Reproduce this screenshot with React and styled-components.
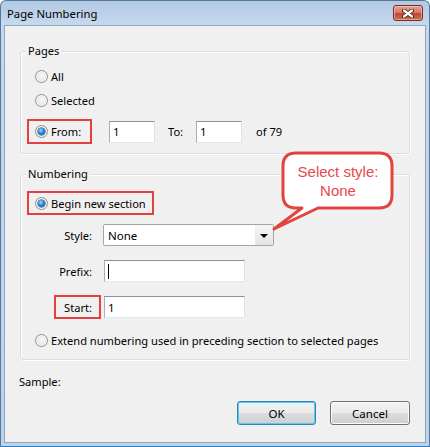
import React from "react";
import styled, { createGlobalStyle, css } from "styled-components";

const Global = createGlobalStyle`
  html, body { margin: 0; padding: 0; background: #ffffff; }
  body {
    font-family: "Noto Sans", "Open Sans", sans-serif;
    font-size: 11.1px;
    color: #000;
  }
  * { box-sizing: border-box; }
`;

const Stage = styled.div`
  position: relative;
  width: 430px;
  height: 447px;
`;

const Window = styled.div`
  width: 430px;
  height: 447px;
  display: flex;
  flex-direction: column;
  border: 1px solid #56779c;
  border-bottom-color: #2f7fc0;
  border-radius: 6px 6px 0 0;
  background: linear-gradient(#b2c9e3 0px, #c4d8ee 22px, #bcd3ec 100%);
  padding: 0 3px 3px;
`;

const TitleBar = styled.div`
  height: 24px;
  flex: none;
  display: flex;
  justify-content: space-between;
  align-items: flex-start;
  padding: 0 3px 0 3px;
`;

const Title = styled.div`
  font-size: 11.3px;
  line-height: 24px;
  padding-top: 1px;
  color: #000;
`;

const CloseButton = styled.div`
  width: 30px;
  height: 16px;
  margin-top: 4px;
  border: 1px solid #7c2a20;
  border-radius: 3px;
  background: linear-gradient(#e4a394 0%, #d27b68 45%, #c0472f 55%, #cf6d4f 100%);
  box-shadow: inset 0 0 0 1px rgba(255, 220, 210, 0.5);
  display: flex;
  align-items: center;
  justify-content: center;
`;

const Client = styled.div`
  flex: 1;
  display: flex;
  flex-direction: column;
  background: #f0f0f0;
  border: 1px solid #8fa6c0;
  padding: 17px 15px 0 15px;
`;

const Group = styled.fieldset`
  margin: ${(p) => p.$mt || 0}px 0 0;
  padding: 0;
  min-width: 0;
  border: 1px solid #d5dfe5;
  border-radius: 3px;
  box-shadow: inset 1px 1px 0 #ffffff, 1px 1px 0 #ffffff;
`;

const Legend = styled.legend`
  margin-left: 5px;
  padding: 0 2px;
  line-height: 16px;
  background: #f0f0f0;
`;

const GroupBody = styled.div`
  display: flex;
  flex-direction: column;
  padding: 0 0 ${(p) => p.$pb}px 14px;
`;

const Row = styled.div`
  display: flex;
  align-items: center;
  height: ${(p) => p.$h || 20}px;
  margin-top: ${(p) => p.$mt || 0}px;
`;

const Option = styled.span`
  display: inline-flex;
  align-items: center;
  gap: 3px;
  white-space: nowrap;
`;

const Marked = styled.span`
  display: inline-flex;
  align-items: center;
  gap: 3px;
  height: ${(p) => p.$h}px;
  width: ${(p) => p.$w}px;
  margin-left: -8px;
  padding-left: 6px;
  border: 2px solid #e2413f;
  white-space: nowrap;
`;

const Radio = styled.span`
  position: relative;
  flex: none;
  width: 13px;
  height: 13px;
  border-radius: 50%;
  border: 1px solid #8d8f92;
  background: radial-gradient(circle at 50% 45%, #fbfbfb 0%, #e6e6e6 60%, #d2d2d2 100%);
  box-shadow: inset 0 0 0 1px #f7f7f7;
  ${(p) =>
    p.$checked &&
    css`
      &::after {
        content: "";
        position: absolute;
        left: 2px;
        top: 2px;
        width: 7px;
        height: 7px;
        border-radius: 50%;
        background: radial-gradient(circle at 40% 35%, #9fdcff 0%, #2a86d6 45%, #0d4d8f 100%);
        box-shadow: 0 0 0 0.5px #1b4d7e;
      }
    `}
`;

const TextBox = styled.div`
  width: ${(p) => p.$w}px;
  height: 22px;
  margin-left: ${(p) => p.$ml || 0}px;
  background: #ffffff;
  border: 1px solid;
  border-color: #8e9196 #dfe2e6 #e3e9ef #abadb3;
  padding-left: 3px;
  display: flex;
  align-items: center;
  font-size: 11.5px;
`;

const Caret = styled.span`
  width: 1px;
  height: 15px;
  background: #000;
`;

const Plain = styled.span`
  margin-left: ${(p) => p.$ml || 0}px;
  white-space: nowrap;
`;

const FieldLabel = styled.div`
  width: 57px;
  flex: none;
  display: flex;
  justify-content: flex-end;
  margin-right: ${(p) => p.$gap}px;
`;

const MarkedLabel = styled.span`
  height: 24px;
  display: flex;
  align-items: center;
  padding: 0 7px 0 8px;
  margin-right: -9px;
  border: 2px solid #e2413f;
`;

const Select = styled.div`
  width: 171px;
  height: 22px;
  display: flex;
  align-items: stretch;
  border: 1px solid #a5a5a5;
  border-radius: 2px;
  background: #ffffff;
  font-size: 11.5px;
`;

const SelectValue = styled.div`
  flex: 1;
  display: flex;
  align-items: center;
  padding-left: 4px;
`;

const SelectArrow = styled.div`
  width: 18px;
  display: flex;
  align-items: center;
  justify-content: center;
  background: linear-gradient(#f6f6f6, #e4e4e4);
  &::before {
    content: "";
    border-left: 4px solid transparent;
    border-right: 4px solid transparent;
    border-top: 4px solid #000;
    margin-top: 1px;
  }
`;

const SampleLine = styled.div`
  height: 16px;
  line-height: 16px;
  margin: 14px 0 0 -1px;
`;

const ButtonBar = styled.div`
  display: flex;
  justify-content: flex-end;
  gap: 14px;
  margin-top: 11px;
`;

const Button = styled.div`
  width: ${(p) => p.$w}px;
  height: 24px;
  border-radius: 3px;
  border: 1px solid ${(p) => (p.$default ? "#3c7fb1" : "#707070")};
  background: linear-gradient(#f2f2f2 0%, #ebebeb 50%, #dddddd 51%, #cfcfcf 100%);
  box-shadow: inset 0 0 0 1px ${(p) => (p.$default ? "#48d0f8" : "#fbfbfb")};
  display: flex;
  align-items: center;
  justify-content: center;
  font-size: 11.5px;
`;

const CalloutShape = styled.svg`
  position: absolute;
  left: 266px;
  top: 148px;
  width: 134px;
  height: 90px;
  overflow: visible;
  pointer-events: none;
`;

const CalloutText = styled.div`
  position: absolute;
  left: 284px;
  top: 155px;
  width: 108px;
  height: 52px;
  display: flex;
  flex-direction: column;
  align-items: center;
  justify-content: center;
  font-family: "Liberation Sans", Arial, sans-serif;
  font-size: 15px;
  line-height: 19px;
  color: #e8474b;
`;

export default function App() {
  return (
    <>
      <Global />
      <Stage>
        <Window>
          <TitleBar>
            <Title>Page Numbering</Title>
            <CloseButton>
              <svg width="12" height="9" viewBox="0 0 12 9">
                <path d="M2 1.5 L10 7.5 M10 1.5 L2 7.5" stroke="#4a1f18" strokeWidth="4" strokeLinecap="round" />
                <path d="M2 1.5 L10 7.5 M10 1.5 L2 7.5" stroke="#ffffff" strokeWidth="2.2" strokeLinecap="round" />
              </svg>
            </CloseButton>
          </TitleBar>
          <Client>
            <Group>
              <Legend>Pages</Legend>
              <GroupBody $pb={9}>
                <Row $mt={7}>
                  <Option><Radio />All</Option>
                </Row>
                <Row $mt={4}>
                  <Option><Radio />Selected</Option>
                </Row>
                <Row $mt={9} $h={25}>
                  <Marked $h={25} $w={65}><Radio $checked />From:</Marked>
                  <TextBox $w={46} $ml={17}>1</TextBox>
                  <Plain $ml={13}>To:</Plain>
                  <TextBox $w={46} $ml={13}>1</TextBox>
                  <Plain $ml={14}>of 79</Plain>
                </Row>
              </GroupBody>
            </Group>

            <Group $mt={12}>
              <Legend>Numbering</Legend>
              <GroupBody $pb={9}>
                <Row $mt={9} $h={24}>
                  <Marked $h={24} $w={127}><Radio $checked />Begin new section</Marked>
                </Row>
                <Row $mt={9} $h={22}>
                  <FieldLabel $gap={11}>Style:</FieldLabel>
                  <Select>
                    <SelectValue>None</SelectValue>
                    <SelectArrow />
                  </Select>
                </Row>
                <Row $mt={14} $h={22}>
                  <FieldLabel $gap={12}>Prefix:</FieldLabel>
                  <TextBox $w={141}><Caret /></TextBox>
                </Row>
                <Row $mt={13} $h={24}>
                  <FieldLabel $gap={12}>
                    <MarkedLabel>Start:</MarkedLabel>
                  </FieldLabel>
                  <TextBox $w={141}>1</TextBox>
                </Row>
                <Row $mt={11}>
                  <Option><Radio />Extend numbering used in preceding section to selected pages</Option>
                </Row>
              </GroupBody>
            </Group>

            <SampleLine>Sample:</SampleLine>

            <ButtonBar>
              <Button $w={79} $default>OK</Button>
              <Button $w={80}>Cancel</Button>
            </ButtonBar>
          </Client>
        </Window>

        <CalloutShape viewBox="266 148 134 90">
          <path
            d="M296 153 H379 Q392 153 392 166 V195 Q392 208 379 208 H318 L274 229 L302 208 H296 Q283 208 283 195 V166 Q283 153 296 153 Z"
            fill="#ffffff"
            stroke="#e2433f"
            strokeWidth="3"
            strokeLinejoin="round"
          />
        </CalloutShape>
        <CalloutText>
          <span>Select style:</span>
          <span>None</span>
        </CalloutText>
      </Stage>
    </>
  );
}
